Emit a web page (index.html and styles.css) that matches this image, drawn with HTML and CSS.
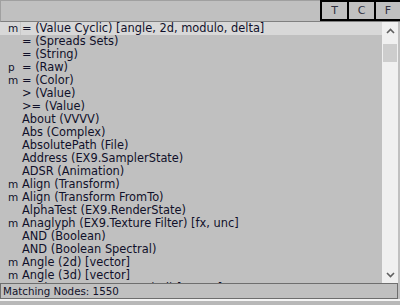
FILE: index.html
```html
<!DOCTYPE html>
<html lang="en">
<head>
    <meta charset="UTF-8">
    <title>Node Browser</title>
    <link rel="stylesheet" href="styles.css">
</head>
<body>

<div class="browser">
    <div class="topbar">
        <div class="search"></div>
        <div class="tab">T</div>
        <div class="tab">C</div>
        <div class="tab">F</div>
    </div>

    <div class="listwrap">
        <ul class="nodes">
            <li class="sel"><span class="tag">m</span><span class="name">= (Value Cyclic) [angle, 2d, modulo, delta]</span></li>
            <li><span class="tag"></span><span class="name">= (Spreads Sets)</span></li>
            <li><span class="tag"></span><span class="name">= (String)</span></li>
            <li><span class="tag">p</span><span class="name">= (Raw)</span></li>
            <li><span class="tag">m</span><span class="name">= (Color)</span></li>
            <li><span class="tag"></span><span class="name">&gt; (Value)</span></li>
            <li><span class="tag"></span><span class="name">&gt;= (Value)</span></li>
            <li><span class="tag"></span><span class="name">About (VVVV)</span></li>
            <li><span class="tag"></span><span class="name">Abs (Complex)</span></li>
            <li><span class="tag"></span><span class="name">AbsolutePath (File)</span></li>
            <li><span class="tag"></span><span class="name">Address (EX9.SamplerState)</span></li>
            <li><span class="tag"></span><span class="name">ADSR (Animation)</span></li>
            <li><span class="tag">m</span><span class="name">Align (Transform)</span></li>
            <li><span class="tag">m</span><span class="name">Align (Transform FromTo)</span></li>
            <li><span class="tag"></span><span class="name">AlphaTest (EX9.RenderState)</span></li>
            <li><span class="tag">m</span><span class="name">Anaglyph (EX9.Texture Filter) [fx, unc]</span></li>
            <li><span class="tag"></span><span class="name">AND (Boolean)</span></li>
            <li><span class="tag"></span><span class="name">AND (Boolean Spectral)</span></li>
            <li><span class="tag">m</span><span class="name">Angle (2d) [vector]</span></li>
            <li><span class="tag">m</span><span class="name">Angle (3d) [vector]</span></li>
            <li><span class="tag">m</span><span class="name">AngleBetweenVectors (3d) [vector]</span></li>
        </ul>
        <div class="scrollbar">
            <div class="arrow up">
                <svg width="9" height="6" viewBox="0 0 9 6"><path d="M1 5 L4.5 1.5 L8 5" fill="none" stroke="#606060" stroke-width="1.6"/></svg>
            </div>
            <div class="thumb"></div>
            <div class="track"></div>
            <div class="arrow">
                <svg width="9" height="6" viewBox="0 0 9 6"><path d="M1 1 L4.5 4.5 L8 1" fill="none" stroke="#606060" stroke-width="1.6"/></svg>
            </div>
        </div>
    </div>

    <div class="status">Matching Nodes: 1550</div>
    <div class="bottom"></div>
</div>

</body>
</html>
```

FILE: styles.css
```css
* {
    margin: 0;
    padding: 0;
    box-sizing: border-box;
}
body {
    font-family: "DejaVu Sans", Verdana, sans-serif;
    font-size: 11.4px;
    color: #10102a;
    background-color: #c0c0c0;
}
.browser {
    width: 400px;
    height: 305px;
    display: flex;
    flex-direction: column;
    background-color: #c0c0c0;
}
.topbar {
    height: 22px;
    flex-shrink: 0;
    display: flex;
    border-top: 1px solid #a0a0a0;
    border-left: 1px solid #a0a0a0;
    border-bottom: 1px solid #808080;
}
.search {
    flex: 1;
}
.tab {
    width: 27px;
    border: 2px solid #000;
    border-right: none;
    margin-top: -1px;
    height: 21px;
    text-align: center;
    line-height: 18px;
    font-size: 11px;
    color: #303040;
}
.tab:last-child {
    width: 26px;
}
.listwrap {
    flex: 1;
    display: flex;
    overflow: hidden;
}
.nodes {
    flex: 1;
    list-style: none;
    overflow: hidden;
}
.nodes li {
    display: flex;
    height: 13px;
    line-height: 13px;
    white-space: nowrap;
}
.nodes li.sel {
    background-color: #d8d8d8;
}
.tag {
    width: 21px;
    padding-left: 8px;
    flex-shrink: 0;
    font-size: 10.5px;
}
.sel .tag {
    border-right: 1px solid #c8c8c8;
}
.name {
    padding-left: 1px;
}
.scrollbar {
    width: 16px;
    margin-right: 2px;
    background-color: #f0f0f0;
    display: flex;
    flex-direction: column;
}
.arrow {
    height: 17px;
    flex-shrink: 0;
    display: flex;
    align-items: center;
    justify-content: center;
}
.arrow.up {
    height: 22px;
    padding-bottom: 5px;
}
.thumb {
    height: 18px;
    margin: 0 1px;
    background-color: #cdcdcd;
}
.track {
    flex: 1;
}
.status {
    height: 16px;
    flex-shrink: 0;
    margin-right: 2px;
    border: 1px solid #6e6e6e;
    padding-left: 2px;
    line-height: 14px;
    font-size: 10.3px;
    color: #10102a;
}
.bottom {
    height: 6px;
    flex-shrink: 0;
    border-top: 2px solid #f4f4f4;
    background-color: #b8b8b8;
}
```
